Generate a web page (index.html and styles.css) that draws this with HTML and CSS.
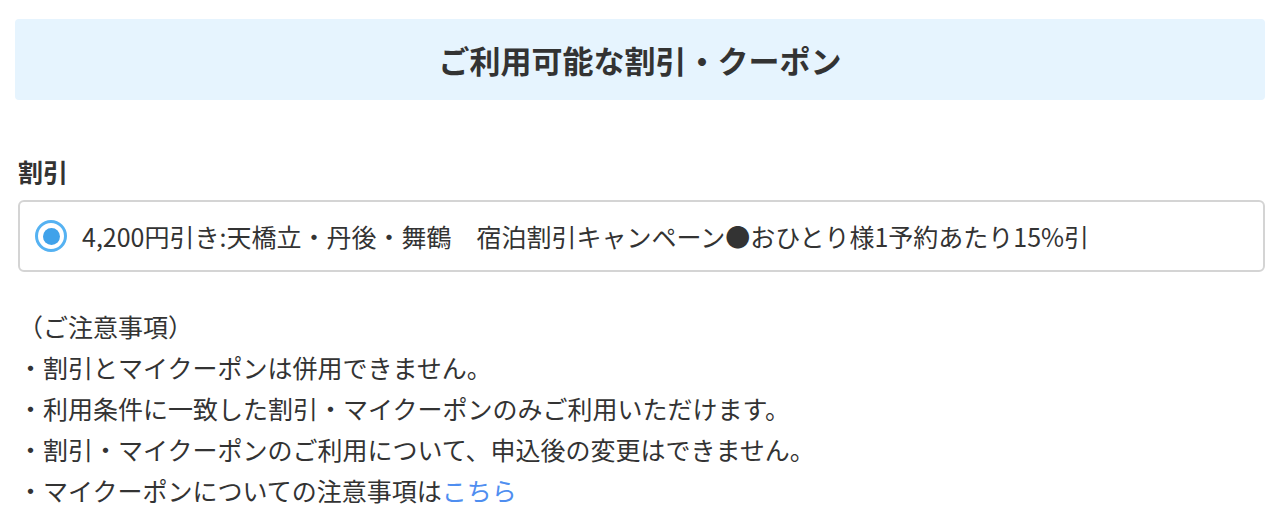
FILE: index.html
```html
<!DOCTYPE html>
<html lang="ja">
<head>
<meta charset="utf-8">
<link rel="stylesheet" href="styles.css">
</head>
<body>
<div class="page">
  <div class="header"><h1 class="title">ご利用可能な割引・クーポン</h1></div>
  <div class="content">
    <h2 class="label">割引</h2>
    <label class="option">
      <span class="radio"><span class="dot"></span></span>
      <span class="option-text">4,200円引き:天橋立・丹後・舞鶴　宿泊割引キャンペーン●おひとり様1予約あたり15%引</span>
    </label>
    <ul class="notes">
      <li class="note-head">（ご注意事項）</li>
      <li>・割引とマイクーポンは併用できません。</li>
      <li>・利用条件に一致した割引・マイクーポンのみご利用いただけます。</li>
      <li>・割引・マイクーポンのご利用について、申込後の変更はできません。</li>
      <li>・マイクーポンについての注意事項は<a class="link" href="#">こちら</a></li>
    </ul>
  </div>
</div>
</body>
</html>
```
FILE: styles.css
```css
html, body {
  margin: 0;
  padding: 0;
  background: #ffffff;
}
body {
  font-family: "Noto Sans CJK JP", "Noto Sans", sans-serif;
  color: #333333;
}
.page {
  padding: 19px 19px 0 15px;
}
.header {
  background: #e6f4fe;
  border-radius: 4px;
  height: 81px;
  display: flex;
  align-items: center;
  justify-content: center;
}
.title {
  margin: 0;
  font-size: 31px;
  font-weight: 700;
  line-height: 1;
  color: #333333;
}
.content {
  padding-left: 3px;
}
.label {
  margin: 53px 0 11px 0;
  font-size: 25px;
  font-weight: 700;
  line-height: 36px;
  height: 36px;
}
.option {
  display: flex;
  align-items: center;
  gap: 15px;
  height: 68px;
  border: 2px solid #d4d4d4;
  border-radius: 6px;
  padding: 0 15px;
}
.radio {
  width: 32px;
  height: 32px;
  box-sizing: border-box;
  border: 3px solid #55b2f2;
  border-radius: 50%;
  display: flex;
  align-items: center;
  justify-content: center;
  flex: none;
}
.dot {
  width: 17px;
  height: 17px;
  border-radius: 50%;
  background: #3fa2ea;
}
.option-text {
  font-size: 25px;
  line-height: 36px;
}
.notes {
  list-style: none;
  margin: 34px 0 0 0;
  padding: 0;
  font-size: 25px;
  line-height: 41px;
}
.link {
  color: #4f8ef0;
  text-decoration: none;
}
```
